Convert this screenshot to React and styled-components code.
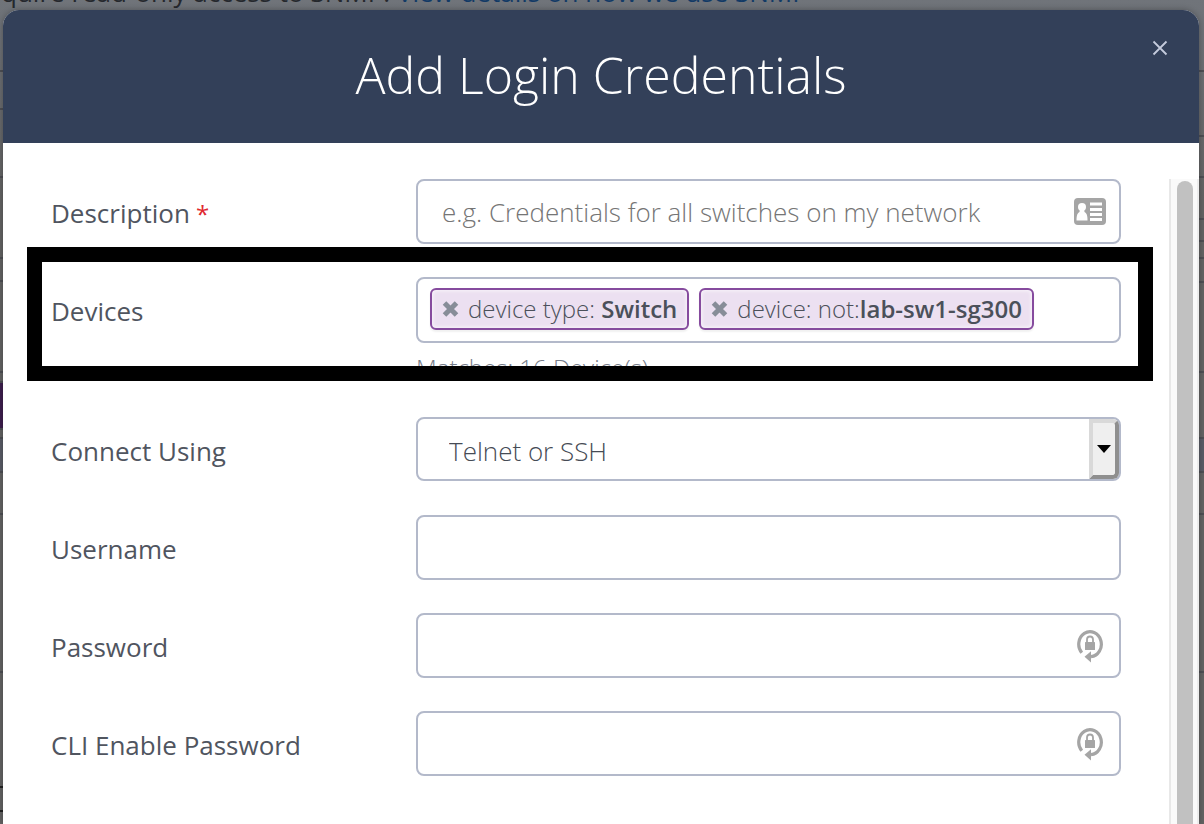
import React from 'react';
import styled, { createGlobalStyle } from 'styled-components';

const GlobalStyle = createGlobalStyle`
    * {
        box-sizing: border-box;
    }

    body {
        margin: 0;
        overflow: hidden;
        background-color: #636363;
        font-family: 'Open Sans', sans-serif;
    }
`;

const Page = styled.div`
    position: relative;
    display: flex;
    flex-direction: column;
    height: 100vh;
    padding: 10px 5px 0 3px;
    overflow: hidden;
`;

const Backdrop = styled.div`
    position: absolute;
    inset: 0;
    overflow: hidden;
    display: flex;
    justify-content: space-between;
    background: linear-gradient(#70747a, #636363 200px);
`;

const Intro = styled.p`
    position: absolute;
    top: -26px;
    left: 1px;
    margin: 0;
    font-size: 26px;
    line-height: 36px;
    white-space: nowrap;
    color: #25282d;
`;

const IntroLink = styled.a`
    color: #123a66;
    text-decoration: none;
`;

const Rail = styled.div`
    width: 5px;
`;

const RailRow = styled.div`
    height: ${({ $height }) => $height}px;
    border-bottom: 2px solid ${({ $dark }) => ($dark ? '#222' : '#4e4f54')};
    background-color: ${({ $fill }) => $fill || 'transparent'};
`;

const Modal = styled.section`
    position: relative;
    flex: 1;
    min-height: 0;
    display: flex;
    flex-direction: column;
    border-radius: 16px 16px 0 0;
    background-color: #fff;
    box-shadow: 0 0 6px rgba(0, 0, 0, 0.3);
`;

const ModalHeader = styled.header`
    position: relative;
    flex: none;
    padding: 30px 60px 33px;
    border-radius: 16px 16px 0 0;
    background-color: #334059;
    text-align: center;
`;

const Title = styled.h1`
    margin: 0;
    color: #fff;
    font-size: 50px;
    line-height: 70px;
    font-weight: 300;
`;

const CloseButton = styled.button`
    position: absolute;
    top: 26px;
    right: 27px;
    display: flex;
    padding: 0;
    border: 0;
    background: none;
    color: #c5cbdc;
`;

const ModalBody = styled.div`
    flex: 1;
    min-height: 0;
    display: flex;
    padding-top: 36px;
`;

const Form = styled.form`
    flex: 1;
    display: flex;
    flex-direction: column;
    gap: 33px;
    padding: 0 48px;
`;

const Row = styled.div`
    position: relative;
    display: grid;
    grid-template-columns: 365px 1fr;
    align-items: start;
    min-height: 65px;
`;

const Label = styled.label`
    color: #50555f;
    font-size: 26px;
    line-height: 36px;
    padding-top: 16px;
`;

const Required = styled.span`
    color: #e0282e;
    font-size: 24px;
`;

const Control = styled.div`
    position: relative;
    display: flex;
`;

const TextInput = styled.input`
    width: 100%;
    height: 65px;
    padding: 0 64px 0 24px;
    border: 2px solid #b3b9ca;
    border-radius: 8px;
    background-color: #fff;
    color: #50555f;
    font-family: inherit;
    font-size: 26px;
    font-weight: 300;

    &::placeholder {
        color: #757575;
        opacity: 1;
    }
`;

const InputIcon = styled.span`
    position: absolute;
    top: 0;
    bottom: 0;
    right: 14px;
    width: 34px;
    display: flex;
    align-items: center;
    justify-content: center;
    color: #a5a5a5;
`;

const Select = styled.select`
    appearance: none;
    width: 100%;
    height: 64px;
    padding: 4px 40px 0 31px;
    border: 2px solid #b3b9ca;
    border-radius: 8px;
    background-color: #fff;
    color: #464b55;
    font-family: inherit;
    font-size: 26px;
    font-weight: 300;
`;

const SelectArrow = styled.span`
    position: absolute;
    top: 2px;
    right: 2px;
    bottom: 2px;
    width: 30px;
    display: flex;
    align-items: center;
    justify-content: center;
    border: 4px solid;
    border-color: #d9d9d9 #8f8f8f #8f8f8f #d9d9d9;
    border-radius: 0 6px 6px 0;
    background-color: #efefef;
    pointer-events: none;
`;

const TagField = styled.div`
    display: flex;
    align-items: flex-start;
    gap: 10px;
    height: 66px;
    padding: 9px 12px;
    border: 2px solid #b3b9ca;
    border-radius: 8px;
`;

const Tag = styled.span`
    display: flex;
    align-items: center;
    gap: 9px;
    height: 42px;
    padding: 0 10px;
    border: 2px solid #864b9e;
    border-radius: 6px;
    background-color: #ece0f1;
    box-shadow: inset 0 0 4px #fff, 0 2px 2px rgba(0, 0, 0, 0.06);
    color: #4b505a;
    font-size: 24px;
    line-height: 36px;
    font-weight: 300;
    white-space: nowrap;
`;

const TagRemove = styled.button`
    display: flex;
    padding: 0;
    border: 0;
    background: none;
    color: #878d98;
`;

const TagValue = styled.strong`
    font-weight: 600;
`;

const Hint = styled.p`
    margin: 8px 0 0;
    color: #777d8a;
    font-size: 24px;
    line-height: 33px;
    font-weight: 300;
`;

const Highlight = styled.div`
    position: absolute;
    inset: -30px -32px 3px -24px;
    border: 15px solid #000;
    pointer-events: none;
`;

const ScrollTrack = styled.div`
    width: 30px;
    padding: 2px 4px 0 6px;
    border-left: 2px solid #e8e8e8;
    border-right: 2px solid #ededed;
    background-color: #fafafa;
`;

const ScrollThumb = styled.div`
    width: 16px;
    height: 100%;
    border-radius: 8px 8px 0 0;
    background-color: #c1c1c1;
`;

const leftRows = [
    { height: 72 },
    { height: 38 },
    { height: 68 },
    { height: 81 },
    { height: 23 },
    { height: 91 },
    { height: 10 },
    { height: 47, fill: '#3e1f4e' },
    { height: 9 },
    { height: 34, fill: '#595c66' },
    { height: 42 },
    { height: 158 },
    { height: 115, dark: true },
    { height: 24, dark: true },
];

const rightRows = [
    { height: 72 },
    { height: 65 },
    { height: 41 },
    { height: 42 },
    { height: 22 },
    { height: 17 },
    { height: 24 },
    { height: 90 },
    { height: 66 },
    { height: 34, fill: '#595c66' },
    { height: 42 },
    { height: 158 },
];

const tags = [
    { name: 'device type: ', value: 'Switch' },
    { name: 'device: not:', value: 'lab-sw1-sg300' },
];

function CardIcon() {
    return (
        <svg width="32" height="27" viewBox="0 0 32 27" aria-hidden="true">
            <rect width="32" height="27" rx="4" fill="currentColor" />
            <circle cx="8" cy="9" r="4" fill="#fff" />
            <path d="M6 11h4l.5 3c2 1 3 3 3 8.500h-11C2.500 17 3.500 15 5.500 14z" fill="#fff" />
            <path d="M16 6h12M16 11.500h12M16 16.500h12M16 21.500h12" stroke="#fff" strokeWidth="2.800" />
        </svg>
    );
}

function LockIcon() {
    return (
        <svg width="28" height="34" viewBox="0 0 28 34" aria-hidden="true">
            <path
                d="M5.800 23.800A11.300 12.500 0 1 1 15 27.700"
                fill="none"
                stroke="currentColor"
                strokeWidth="3.200"
            />
            <path d="M8.500 27.800l6.500-5.600v11.200z" fill="currentColor" />
            <rect x="9" y="13" width="10" height="8" rx="0.500" fill="currentColor" />
            <path d="M11 14v-3.500a3 3 0 0 1 6 0v3.500" fill="none" stroke="currentColor" strokeWidth="1.800" />
        </svg>
    );
}

function TextRow({ id, label, type = 'text', placeholder, required, icon }) {
    return (
        <Row>
            <Label htmlFor={id}>
                {label}
                {required && <Required> *</Required>}
            </Label>
            <Control>
                <TextInput id={id} type={type} placeholder={placeholder} />
                {icon && <InputIcon>{icon}</InputIcon>}
            </Control>
        </Row>
    );
}

function RailRows({ rows }) {
    return (
        <Rail>
            {rows.map((row, i) => (
                <RailRow key={i} $height={row.height} $fill={row.fill} $dark={row.dark} />
            ))}
        </Rail>
    );
}

function App() {
    return (
        <Page>
            <GlobalStyle />
            <Backdrop>
                <RailRows rows={leftRows} />
                <RailRows rows={rightRows} />
                <Intro>
                    quire read-only access to SNMP.{' '}
                    <IntroLink href="#snmp">View details on how we use SNMP</IntroLink>
                </Intro>
            </Backdrop>
            <Modal role="dialog" aria-labelledby="modal-title">
                <ModalHeader>
                    <Title id="modal-title">Add Login Credentials</Title>
                    <CloseButton type="button" aria-label="Close">
                        <svg width="24" height="24" viewBox="0 0 24 24">
                            <path d="M5.500 5.500l13 13M18.500 5.500l-13 13" stroke="currentColor" strokeWidth="1.800" />
                        </svg>
                    </CloseButton>
                </ModalHeader>
                <ModalBody>
                    <Form>
                        <TextRow
                            id="description"
                            label="Description"
                            placeholder="e.g. Credentials for all switches on my network"
                            required
                            icon={<CardIcon />}
                        />
                        <Row role="group" aria-labelledby="devices-label">
                            <Label as="span" id="devices-label">
                                Devices
                            </Label>
                            <div>
                                <TagField>
                                    {tags.map((tag) => (
                                        <Tag key={tag.value}>
                                            <TagRemove type="button" aria-label={`Remove ${tag.value}`}>
                                                <svg width="17" height="16" viewBox="0 0 17 16">
                                                    <path
                                                        d="M2.500 2l12 12M14.500 2l-12 12"
                                                        stroke="currentColor"
                                                        strokeWidth="5"
                                                    />
                                                </svg>
                                            </TagRemove>
                                            <span>
                                                {tag.name}
                                                <TagValue>{tag.value}</TagValue>
                                            </span>
                                        </Tag>
                                    ))}
                                </TagField>
                                <Hint>Matches: 16 Device(s)</Hint>
                            </div>
                            <Highlight />
                        </Row>
                        <Row>
                            <Label htmlFor="connect">Connect Using</Label>
                            <Control>
                                <Select id="connect">
                                    <option>Telnet or SSH</option>
                                </Select>
                                <SelectArrow>
                                    <svg width="14" height="8" viewBox="0 0 14 8" aria-hidden="true">
                                        <path d="M0 0h14L7 8z" fill="#000" />
                                    </svg>
                                </SelectArrow>
                            </Control>
                        </Row>
                        <TextRow id="username" label="Username" />
                        <TextRow id="password" label="Password" type="password" icon={<LockIcon />} />
                        <TextRow
                            id="enable-password"
                            label="CLI Enable Password"
                            type="password"
                            icon={<LockIcon />}
                        />
                    </Form>
                    <ScrollTrack>
                        <ScrollThumb />
                    </ScrollTrack>
                </ModalBody>
            </Modal>
        </Page>
    );
}

export default App;
